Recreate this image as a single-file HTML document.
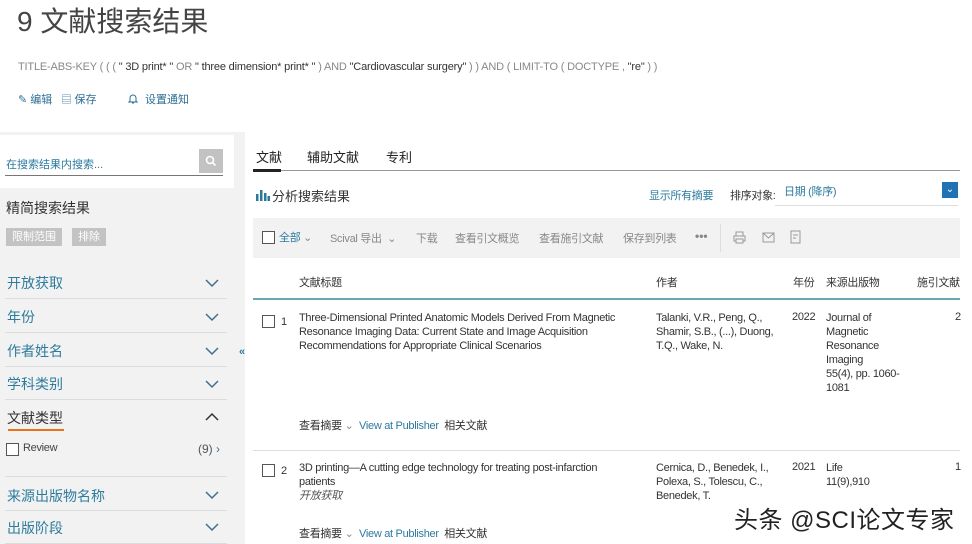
<!DOCTYPE html>
<html><head><meta charset="utf-8"><style>
*{margin:0;padding:0;box-sizing:border-box}
body{width:972px;height:544px;overflow:hidden;background:#fff;font-family:"Liberation Sans","Noto Sans CJK SC",sans-serif;color:#333;position:relative}
.a{position:absolute;white-space:nowrap}
.s{font-size:11px;letter-spacing:-0.3px}
.teal{color:#2b7a9e}
.gray{color:#888}
.fl{position:absolute;left:7px;font-size:14px;color:#2e7c9c}
.ln{position:absolute;left:5px;width:222px;height:1px;background:#dcdcdc}
.chev{position:absolute;left:205px;width:14px;height:9px}
.cb{position:absolute;width:13px;height:13px;border:1px solid #555;background:#fff}
</style></head><body>
<div class="a" style="left:17px;top:0;font-size:28px;color:#444">9 文献搜索结果</div>
<div class="a" style="left:18px;top:61px;color:#888;font-size:11px;letter-spacing:-0.18px">TITLE-ABS-KEY ( ( ( <span style="color:#333">" 3D print* "</span> OR <span style="color:#333">" three dimension* print* "</span> ) AND <span style="color:#333">"Cardiovascular surgery"</span> ) ) AND ( LIMIT-TO ( DOCTYPE , <span style="color:#333">"re"</span> ) )</div>
<div class="a" style="left:18px;top:91px;font-size:11px;color:#2b6f95">✎ 编辑 &nbsp; <span style="font-size:10px">▤</span> 保存</div>
<div class="a" style="left:145px;top:91px;font-size:11px;color:#2b6f95">设置通知</div>
<svg class="a" style="left:128px;top:93px" width="10" height="11"><path d="M2 8V5a3 3 0 0 1 6 0v3l1 1H1z M4 10h2" stroke="#2b6f95" fill="none"/></svg>

<div style="position:absolute;left:0;top:132px;width:245px;height:412px;background:#f2f2f2"></div>
<div style="position:absolute;left:0;top:135px;width:234px;height:53px;background:#fff"></div>
<div class="a" style="left:6px;top:156px;font-size:11px;color:#2b7a9e">在搜索结果内搜索...</div>
<div style="position:absolute;left:5px;top:175px;width:218px;height:1px;background:#777"></div>
<div style="position:absolute;left:199px;top:149px;width:24px;height:24px;background:#c2c2c2"></div>
<svg class="a" style="left:205px;top:155px" width="12" height="12"><circle cx="5" cy="5" r="3.5" stroke="#fff" stroke-width="1.6" fill="none"/><line x1="7.5" y1="7.5" x2="10.5" y2="10.5" stroke="#fff" stroke-width="1.6"/></svg>
<div class="a" style="left:6px;top:198px;font-size:14px;color:#333">精简搜索结果</div>
<div class="a" style="left:6px;top:228px;width:56px;height:18px;background:#c3c3c3;color:#fff;font-size:11px;text-align:center;line-height:18px">限制范围</div>
<div class="a" style="left:72px;top:228px;width:34px;height:18px;background:#c3c3c3;color:#fff;font-size:11px;text-align:center;line-height:18px">排除</div>

<div class="fl" style="top:273px">开放获取</div><div class="ln" style="top:298px"></div>
<div class="fl" style="top:307px">年份</div><div class="ln" style="top:332px"></div>
<div class="fl" style="top:341px">作者姓名</div><div class="ln" style="top:366px"></div>
<div class="fl" style="top:374px">学科类别</div><div class="ln" style="top:399px"></div>
<div class="fl" style="top:408px;color:#333">文献类型</div>
<div style="position:absolute;left:8px;top:429px;width:56px;height:2px;background:#e9711c"></div>
<div class="fl" style="top:486px">来源出版物名称</div><div class="ln" style="top:510px"></div>
<div class="fl" style="top:518px">出版阶段</div><div class="ln" style="top:543px"></div>
<svg class="chev" style="top:279px" viewBox="0 0 14 9"><path d="M1 1l6 6 6-6" stroke="#3f6f8e" stroke-width="1.5" fill="none"/></svg>
<svg class="chev" style="top:313px" viewBox="0 0 14 9"><path d="M1 1l6 6 6-6" stroke="#3f6f8e" stroke-width="1.5" fill="none"/></svg>
<svg class="chev" style="top:347px" viewBox="0 0 14 9"><path d="M1 1l6 6 6-6" stroke="#3f6f8e" stroke-width="1.5" fill="none"/></svg>
<svg class="chev" style="top:380px" viewBox="0 0 14 9"><path d="M1 1l6 6 6-6" stroke="#3f6f8e" stroke-width="1.5" fill="none"/></svg>
<svg class="chev" style="top:412px" viewBox="0 0 14 9"><path d="M1 8l6-6 6 6" stroke="#333" stroke-width="1.5" fill="none"/></svg>
<svg class="chev" style="top:491px" viewBox="0 0 14 9"><path d="M1 1l6 6 6-6" stroke="#3f6f8e" stroke-width="1.5" fill="none"/></svg>
<svg class="chev" style="top:523px" viewBox="0 0 14 9"><path d="M1 1l6 6 6-6" stroke="#3f6f8e" stroke-width="1.5" fill="none"/></svg>
<div class="cb" style="left:6px;top:443px"></div>
<div class="a s" style="left:23px;top:442px;color:#444">Review</div>
<div class="a" style="left:198px;top:442px;color:#555;font-size:12px">(9) <span style="color:#3f6f8e">›</span></div>
<div class="ln" style="top:476px"></div>
<div class="a" style="left:239px;top:346px;font-size:11px;color:#2b7a9e;font-weight:bold">«</div>

<div class="a" style="left:256px;top:147px;font-size:13px;color:#222">文献</div>
<div class="a" style="left:307px;top:147px;font-size:13px;color:#222">辅助文献</div>
<div class="a" style="left:386px;top:147px;font-size:13px;color:#222">专利</div>
<div style="position:absolute;left:253px;top:170px;width:707px;height:1px;background:#999"></div>
<div style="position:absolute;left:253px;top:169px;width:28px;height:3px;background:#222"></div>
<svg class="a" style="left:256px;top:189px" width="14" height="12"><rect x="0" y="5" width="2.5" height="7" fill="#2b7a9e"/><rect x="4" y="1" width="2.5" height="11" fill="#2b7a9e"/><rect x="8" y="4" width="2.5" height="8" fill="#2b7a9e"/><rect x="11.5" y="7" width="2.5" height="5" fill="#2b7a9e"/></svg>
<div class="a" style="left:272px;top:186px;font-size:13px;color:#333">分析搜索结果</div>
<div class="a s" style="left:649px;top:187px" ><span class="teal">显示所有摘要</span></div>
<div class="a s" style="left:730px;top:187px;color:#333">排序对象:</div>
<div class="a s teal" style="left:784px;top:183px">日期 (降序)</div>
<div style="position:absolute;left:775px;top:205px;width:183px;height:1px;background:#ddd"></div>
<div style="position:absolute;left:942px;top:182px;width:16px;height:16px;background:#1f73b5;color:#fff;font-size:10px;text-align:center;line-height:16px">⌄</div>

<div style="position:absolute;left:253px;top:218px;width:707px;height:40px;background:#f2f2f2"></div>
<div class="cb" style="left:262px;top:231px"></div>
<div class="a s" style="left:279px;top:229px"><span class="teal">全部</span> <span class="gray">⌄</span></div>
<div class="a s gray" style="left:330px;top:230px">Scival 导出 &nbsp;⌄</div>
<div class="a s gray" style="left:416px;top:230px">下载</div>
<div class="a s gray" style="left:455px;top:230px">查看引文概览</div>
<div class="a s gray" style="left:539px;top:230px">查看施引文献</div>
<div class="a s gray" style="left:623px;top:230px">保存到列表</div>
<div class="a gray" style="left:695px;top:229px;font-size:12px;font-weight:bold">•••</div>
<div style="position:absolute;left:720px;top:224px;width:1px;height:28px;background:#ddd"></div>
<svg class="a" style="left:733px;top:231px" width="13" height="13"><rect x="3" y="1" width="7" height="4" fill="none" stroke="#999"/><rect x="1" y="5" width="11" height="5" fill="none" stroke="#999"/><rect x="3" y="8" width="7" height="4" fill="#f2f2f2" stroke="#999"/></svg>
<svg class="a" style="left:762px;top:232px" width="13" height="11"><rect x="1" y="1" width="11" height="9" fill="none" stroke="#999"/><path d="M1 1l5.5 5 5.5-5" stroke="#999" fill="none"/></svg>
<svg class="a" style="left:790px;top:230px" width="11" height="14"><path d="M1 1h9v12h-9z" stroke="#999" fill="none"/><path d="M3 5h5M3 8h3" stroke="#999"/></svg>

<div class="a s" style="left:299px;top:274px;color:#333">文献标题</div>
<div class="a s" style="left:656px;top:274px;color:#333">作者</div>
<div class="a s" style="left:793px;top:274px;color:#333">年份</div>
<div class="a s" style="left:826px;top:274px;color:#333">来源出版物</div>
<div class="a s" style="left:917px;top:274px;color:#333">施引文献</div>
<div style="position:absolute;left:253px;top:298px;width:707px;height:2px;background:#6aa7b4"></div>

<div class="cb" style="left:262px;top:315px"></div>
<div class="a s" style="left:281px;top:316px">1</div>
<div class="a s" style="left:299px;top:311px;line-height:14px;color:#333">Three-Dimensional Printed Anatomic Models Derived From Magnetic<br>Resonance Imaging Data: Current State and Image Acquisition<br>Recommendations for Appropriate Clinical Scenarios</div>
<div class="a s" style="left:656px;top:311px;line-height:14px">Talanki, V.R., Peng, Q.,<br>Shamir, S.B., (...), Duong,<br>T.Q., Wake, N.</div>
<div class="a s" style="left:792px;top:311px">2022</div>
<div class="a s" style="left:826px;top:311px;line-height:14px">Journal of<br>Magnetic<br>Resonance<br>Imaging<br>55(4), pp. 1060-<br>1081</div>
<div class="a s" style="left:955px;top:311px">2</div>
<div class="a s" style="left:299px;top:417px"><span style="color:#333">查看摘要</span> <span class="gray">⌄</span> &nbsp;<span class="teal">View at Publisher</span> &nbsp;<span style="color:#333">相关文献</span></div>
<div style="position:absolute;left:253px;top:450px;width:707px;height:1px;background:#ddd"></div>

<div class="cb" style="left:262px;top:464px"></div>
<div class="a s" style="left:281px;top:465px">2</div>
<div class="a s" style="left:299px;top:461px;line-height:14px;color:#333">3D printing—A cutting edge technology for treating post-infarction<br>patients<br><i style="color:#555">开放获取</i></div>
<div class="a s" style="left:656px;top:461px;line-height:14px">Cernica, D., Benedek, I.,<br>Polexa, S., Tolescu, C.,<br>Benedek, T.</div>
<div class="a s" style="left:792px;top:461px">2021</div>
<div class="a s" style="left:826px;top:461px;line-height:14px">Life<br>11(9),910</div>
<div class="a s" style="left:955px;top:461px">1</div>
<div class="a s" style="left:299px;top:525px"><span style="color:#333">查看摘要</span> <span class="gray">⌄</span> &nbsp;<span class="teal">View at Publisher</span> &nbsp;<span style="color:#333">相关文献</span></div>

<div class="a" style="left:734px;top:500px;font-size:24px;letter-spacing:0.5px;color:#222;text-shadow:1px 1px 0 #fff,-1px -1px 0 #fff,1px -1px 0 #fff,-1px 1px 0 #fff">头条 @SCI论文专家</div>
</body></html>
